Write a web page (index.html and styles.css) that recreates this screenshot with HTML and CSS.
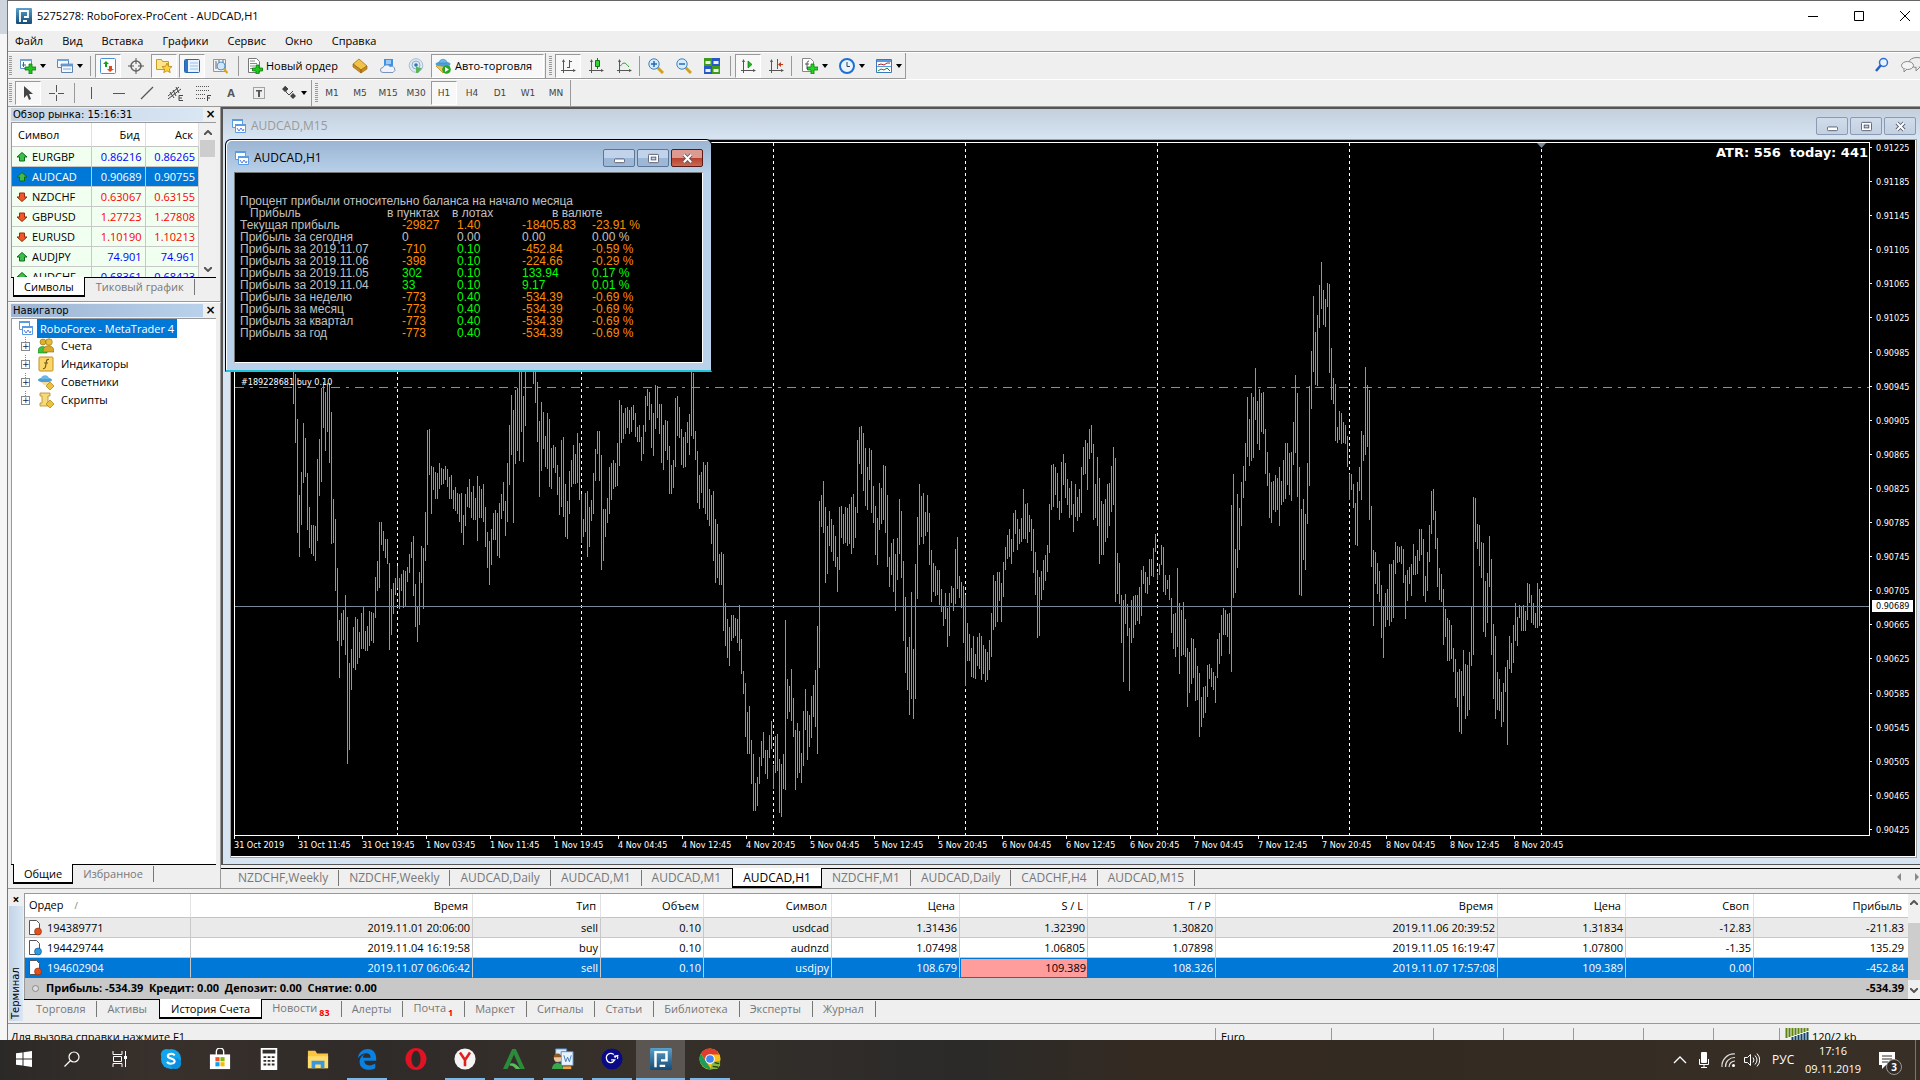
FILE: index.html
```html
<!DOCTYPE html>
<html lang="ru">
<head>
  <meta charset="UTF-8" />
  <meta name="viewport" content="width=device-width, initial-scale=1.0" />
  <title>5275278: RoboForex-ProCent - AUDCAD,H1</title>
  <link rel="stylesheet" href="styles.css">
</head>
<body>
  <!-- Иконки -->
  <svg class="sprite" aria-hidden="true">
    <linearGradient id="g-logo" x2="0" y2="1"><stop stop-color="#5aa0c8"/><stop offset="1" stop-color="#154a76"/></linearGradient>
    <symbol id="i-logo" viewBox="0 0 16 16"><rect width="16" height="16" rx="1" fill="url(#g-logo)"/><path d="M4 14V3h8v6H8M7 13h4" fill="none" stroke="#fff" stroke-width="1.800"/></symbol>
    <symbol id="i-chart" viewBox="0 0 16 16"><path d="M1.500 1.500h10v8h-10z" fill="#fff" stroke="#5b9be0"/><path d="M1 1h11v2H1z" fill="#5b9be0"/><path d="M4.500 6.500h7v0h3v8h-10z" fill="#fff" stroke="#5b9be0"/><path d="M4 6h11v2H4z" fill="#5b9be0"/><path d="M6 10l2 3 2-3 2 3 1-2" fill="none" stroke="#5b7be0"/></symbol>
    <symbol id="i-new" viewBox="0 0 16 16"><path d="M.5 1.500h11v9H.5z" fill="#fff" stroke="#5a92c8"/><path d="M0 1h12v2H0z" fill="#6fa5d8"/><path d="M3.500 4v5M2 7h4" stroke="#467"/><path d="M9 6h3v3h4v3h-4v4H9v-4H5V9h4z" fill="#1fc71f" stroke="#0a7a0a" stroke-width=".8"/></symbol>
    <symbol id="i-windows" viewBox="0 0 16 16"><path d="M.5 1.500h11v8H.5z" fill="#f4f9ff" stroke="#5a84b4"/><path d="M0 1h12v2H0z" fill="#6fa5d8"/><path d="M4.500 6.500h11v8h-11z" fill="#f4f9ff" stroke="#5a84b4"/><path d="M4 6h12v2H4zM6 11h8" fill="#6fa5d8" stroke="#5a84b4" stroke-width=".7"/></symbol>
    <symbol id="i-market" viewBox="0 0 16 16"><rect x=".5" y=".5" width="15" height="15" rx="1" fill="#fff" stroke="#4a90d9"/><path d="M6 3l3 3H7v3H5V6H3z" fill="#1a9f1a"/><path d="M10 14l-3-3h2V8h3v3h2z" fill="#e04a1a"/></symbol>
    <symbol id="i-cross" viewBox="0 0 16 16"><circle cx="8" cy="8" r="5" fill="none" stroke="#666" stroke-width="1.500"/><path d="M8 0v6M8 10v6M0 8h6M10 8h6" stroke="#555"/></symbol>
    <symbol id="i-nav" viewBox="0 0 16 16"><path d="M.5 1.500h5l1 2h6v8H.5z" fill="#ffe58a" stroke="#c79a2a"/><path d="M11 5l1.500 3.300 3.500.3-2.600 2.400.8 3.600L11 12.800l-3.200 1.800.8-3.600L6 8.600l3.500-.3z" fill="#ffd23a" stroke="#b5831a" stroke-width=".8"/></symbol>
    <symbol id="i-data" viewBox="0 0 16 16"><rect x=".5" y="1.500" width="15" height="13" rx="1" fill="#eaf4ff" stroke="#2a66b0"/><path d="M1 2h3v12H1z" fill="#2f74c8"/><path d="M6 5h8M6 8h8M6 11h8" stroke="#9bbfe6"/></symbol>
    <symbol id="i-test" viewBox="0 0 16 16"><path d="M1.500 1.500h12v12h-12z" fill="#f3f3f3" stroke="#8a99aa"/><path d="M4 3v8M7 2v7M11 2v5" stroke="#667"/><circle cx="9" cy="8" r="4" fill="#cfe6fa" stroke="#5a92c8"/><path d="M12 11l3.500 4" stroke="#d9a520" stroke-width="2"/></symbol>
    <symbol id="i-order" viewBox="0 0 16 16"><path d="M1.500.5h8l3 3v11h-11z" fill="#fff" stroke="#777"/><path d="M3 3h5M3 5.500h7M3 8h5M3 10.500h3" stroke="#888"/><path d="M9 7h3v3h3.500v3H12v3H9v-3H5.500v-3H9z" fill="#1fc71f" stroke="#0a7a0a" stroke-width=".8"/></symbol>
    <symbol id="i-book" viewBox="0 0 16 16"><path d="M7 1l8 7-6 4-8-6z" fill="#f2c14a" stroke="#a87414" stroke-width=".8"/><path d="M1 6l8 6v3L1 9zM15 8v3l-6 4v-3z" fill="#c98f1e" stroke="#8a5c0c" stroke-width=".6"/></symbol>
    <symbol id="i-cloud" viewBox="0 0 16 16"><path d="M4 1h9v8H4z" fill="#3a94e6"/><path d="M6 3h5M6 5h5" stroke="#fff"/><path d="M3 14.500a2.500 2.500 0 0 1 0-5 4 4 0 0 1 7-1 3 3 0 0 1 3 6z" fill="#eef3fb" stroke="#7a92b8"/></symbol>
    <symbol id="i-signal" viewBox="0 0 16 16"><circle cx="8" cy="7.500" r="6.800" fill="#dfe9f4" stroke="#a5bdd2"/><circle cx="8" cy="7" r="4" fill="none" stroke="#8cb0d0"/><circle cx="8" cy="7" r="1.800" fill="#2f74c8"/><path d="M8 8a7 7 0 0 0 6 2l-4 5H8z" fill="#5ab45a"/></symbol>
    <symbol id="i-auto" viewBox="0 0 16 16"><path d="M1 8l7-2 7 2-7 7z" fill="#f0c64a" stroke="#b0821a" stroke-width=".7"/><ellipse cx="8" cy="6" rx="7.500" ry="2.500" fill="#4d9fd6"/><path d="M4 5c0-5 8-5 8 0z" fill="#6ab8ea" stroke="#2d7fb8" stroke-width=".5"/><circle cx="11.500" cy="11.500" r="4.300" fill="#27a527"/><path d="M10 9v5l4-2.500z" fill="#fff"/></symbol>
    <symbol id="i-bars" viewBox="0 0 16 16"><path d="M3.500 2v13M1 12.500h14" stroke="#555" fill="none"/><path d="M2 4l1.500-3L5 4zM13 11l3 1.500-3 1.500z" fill="#555"/><path d="M9.500 2v8M9 3.500h3M7 9.500h3" stroke="#0a8a0a"/></symbol>
    <symbol id="i-candle" viewBox="0 0 16 16"><path d="M3.500 2v13M1 12.500h14" stroke="#555" fill="none"/><path d="M2 4l1.500-3L5 4zM13 11l3 1.500-3 1.500z" fill="#555"/><path d="M9.500 0v11" stroke="#0a7a0a"/><path d="M7.500 2.500h4v6h-4z" fill="#35d335" stroke="#0a7a0a"/></symbol>
    <symbol id="i-line" viewBox="0 0 16 16"><path d="M3.500 2v13M1 12.500h14" stroke="#555" fill="none"/><path d="M2 4l1.500-3L5 4zM13 11l3 1.500-3 1.500z" fill="#555"/><path d="M3 9c2-1 3-4 5-4s3 2 5 4" fill="none" stroke="#2a9a2a"/></symbol>
    <symbol id="i-zin" viewBox="0 0 16 16"><path d="M9 9l6 6" stroke="#d2a01e" stroke-width="3"/><circle cx="6" cy="6" r="5.200" fill="#d4ecfb" stroke="#3f80c2"/><path d="M3 6h6M6 3v6" stroke="#2a6ab0" stroke-width="1.500"/></symbol>
    <symbol id="i-zout" viewBox="0 0 16 16"><path d="M9 9l6 6" stroke="#d2a01e" stroke-width="3"/><circle cx="6" cy="6" r="5.200" fill="#d4ecfb" stroke="#3f80c2"/><path d="M3 6h6" stroke="#2a6ab0" stroke-width="1.500"/></symbol>
    <symbol id="i-tile" viewBox="0 0 16 16"><path d="M0 0h8v8H0zM8 8h8v8H8z" fill="#3f9a1a"/><path d="M8 0h8v8H8zM0 8h8v8H0z" fill="#2858c8"/><path d="M1.500 3h5v3h-5zM9.500 3h5v3h-5zM1.500 11h5v3h-5zM9.500 11h5v3h-5z" fill="#e9f3e9"/></symbol>
    <symbol id="i-scroll" viewBox="0 0 16 16"><path d="M3.500 2v13M1 12.500h14" stroke="#555" fill="none"/><path d="M2 4l1.500-3L5 4zM13 11l3 1.500-3 1.500z" fill="#555"/><path d="M8 3l4 3.500L8 10z" fill="#1fb81f" stroke="#0a7a0a" stroke-width=".7"/></symbol>
    <symbol id="i-shift" viewBox="0 0 16 16"><path d="M3.500 2v13M1 12.500h14" stroke="#555" fill="none"/><path d="M2 4l1.500-3L5 4zM13 11l3 1.500-3 1.500z" fill="#555"/><path d="M9.500 1v10" stroke="#2a66b0"/><path d="M10 6.500l3-2.500v2h2v1h-2v2z" fill="#c23a10"/></symbol>
    <symbol id="i-ind" viewBox="0 0 16 16"><path d="M.5.5h8l3 3v10H.5z" fill="#fff" stroke="#888"/><path d="M7 3c-2 0-2 2-2 3v5M3 6h4" fill="none" stroke="#555"/><path d="M9 6h3v3h4v3h-4v4H9v-4H5.500V9H9z" fill="#1fd71f" stroke="#0a7a0a" stroke-width=".8"/></symbol>
    <symbol id="i-clock" viewBox="0 0 16 16"><circle cx="8" cy="8" r="7" fill="#eaf4ff" stroke="#1f6fd0" stroke-width="2"/><path d="M8 4v4.500h3" fill="none" stroke="#345"/></symbol>
    <symbol id="i-tpl" viewBox="0 0 16 16"><path d="M.5 1.500h15v13H.5z" fill="#fff" stroke="#3a78bc"/><path d="M1 2h14v2H1zM1 8h14v1H1z" fill="#5a9ade"/><path d="M2 7l3-1 3 1 3-2h3" fill="none" stroke="#a02a2a"/><path d="M2 13l3-2 3 1 3-2 3 3" fill="none" stroke="#1a8a1a"/></symbol>
    <symbol id="i-cursor" viewBox="0 0 16 16"><path d="M4 1v12l3-3 2 5 2-1-2-5h4z" fill="#444"/></symbol>
    <symbol id="i-plus" viewBox="0 0 16 16"><path d="M8.500 0v7M8.500 10v6M1 8.500h6M10 8.500h6" stroke="#555"/></symbol>
    <symbol id="i-vl" viewBox="0 0 16 16"><path d="M8.500 2v12" stroke="#555"/></symbol>
    <symbol id="i-hl" viewBox="0 0 16 16"><path d="M2 8.500h12" stroke="#555"/></symbol>
    <symbol id="i-tl" viewBox="0 0 16 16"><path d="M2 14L14 2" stroke="#555" stroke-width="1.200"/></symbol>
    <symbol id="i-chan" viewBox="0 0 16 16"><path d="M1 11L12 2M1 14L14 4M3 7l4 6M6 5l3 6M9 2l3 6" stroke="#444"/><path d="M16 10.500h-4v5h4M12 13h3" fill="none" stroke="#444"/></symbol>
    <symbol id="i-fib" viewBox="0 0 16 16"><path d="M1 1.500h14M1 5.500h14M1 9.500h10M1 13.500h9" stroke="#555" stroke-dasharray="1 1"/><path d="M12.500 16v-5.500H16M12 13h3" fill="none" stroke="#444"/></symbol>
    <symbol id="i-label" viewBox="0 0 16 16"><path d="M2.500 2.500h11v11h-11z" fill="none" stroke="#555" stroke-dasharray="1 1"/><path d="M5 5h6v1.500H9V12H7V6.500H5z" fill="#555"/></symbol>
    <symbol id="i-arrows" viewBox="0 0 16 16"><path d="M4 1l3 3H5v3l3 3 4-4M2 4h5" fill="none" stroke="#444"/><path d="M4 1l3 3-3 3-3-3zM12 8l3 3-3 3-3-3z" fill="#444"/></symbol>
    <symbol id="i-up" viewBox="0 0 12 12"><path d="M6 1.500l5 4.500H8.500v4h-5V6H1z" fill="#3dbd4a" stroke="#0f6a1c"/></symbol>
    <symbol id="i-down" viewBox="0 0 12 12"><path d="M6 10.500L1 6h2.500V2h5v4H11z" fill="#f0582a" stroke="#98290a"/></symbol>
    <symbol id="i-acc" viewBox="0 0 16 16"><circle cx="5" cy="4" r="3" fill="#e0b02a" stroke="#8a6a10" stroke-width=".6"/><circle cx="11" cy="4" r="3.300" fill="#e8bd3a" stroke="#8a6a10" stroke-width=".6"/><path d="M0 13c0-6 9-6 9 0v2H0z" fill="#3cc43c" stroke="#1a7a1a" stroke-width=".6"/><path d="M5 13c0-7 11-7 11 0v1H5z" fill="#dba928" stroke="#8a6a10" stroke-width=".6"/></symbol>
    <symbol id="i-fx" viewBox="0 0 16 16"><rect x="1" y="1" width="14" height="14" rx="1" fill="#fbd76a" stroke="#c0902a"/><path d="M11 3.500c-3-.5-2.500 2-3 4.500s-.5 5-3 4.500M6 7h4" fill="none" stroke="#7a5a10" stroke-width="1.200"/></symbol>
    <symbol id="i-adv" viewBox="0 0 16 16"><ellipse cx="7" cy="6" rx="7" ry="2.500" fill="#4d9fd6"/><path d="M3 5c0-5 8-5 8 0z" fill="#6ab8ea"/><path d="M3 8h9l-2 3H6z" fill="#f3dca0"/><path d="M12 8l4 4-4 4-4-4z" fill="#ecc23c" stroke="#a77b15" stroke-width=".7"/></symbol>
    <symbol id="i-scr" viewBox="0 0 16 16"><path d="M2 1h10v3h-2v7h2v3H2v-3h2V4H2z" fill="#f6d97a" stroke="#b88a20" stroke-width=".8"/><path d="M12 8l4 4-4 4-4-4z" fill="#ecc23c" stroke="#a77b15" stroke-width=".7"/></symbol>
    <symbol id="i-sell" viewBox="0 0 16 16"><path d="M2.500.5h7l3 3v11h-10z" fill="#fff" stroke="#555"/><circle cx="11" cy="11.500" r="3.500" fill="#e2501e" stroke="#8a2a08" stroke-width=".6"/></symbol>
    <symbol id="i-buy" viewBox="0 0 16 16"><path d="M2.500.5h7l3 3v11h-10z" fill="#fff" stroke="#555"/><circle cx="11" cy="11.500" r="3.500" fill="#2a9be2" stroke="#0a4a8a" stroke-width=".6"/></symbol>
    <symbol id="i-find" viewBox="0 0 16 16"><circle cx="9.500" cy="5.500" r="4" fill="#e8f2ff" stroke="#2f6fd0" stroke-width="1.500"/><path d="M7 8l-5 6" stroke="#2a5fc0" stroke-width="2.500"/></symbol>
    <symbol id="i-chat" viewBox="0 0 24 16"><ellipse cx="16" cy="5.500" rx="8" ry="5" fill="#eee" stroke="#888"/><path d="M15 10v4l4-4" fill="#eee" stroke="#888"/><ellipse cx="6.500" cy="8.500" rx="6" ry="4" fill="#f4f4f4" stroke="#888"/><path d="M3 12v3l3-3" fill="#f4f4f4" stroke="#888"/></symbol>
    <symbol id="w-min" viewBox="0 0 12 12"><rect x=".5" y="6.500" width="11" height="4" rx="1" fill="#fff" stroke="#555a70"/></symbol>
    <symbol id="w-max" viewBox="0 0 12 12"><rect x=".5" y="1.500" width="11" height="9" rx="1" fill="#fff" stroke="#555a70"/><rect x="3.500" y="4.500" width="5" height="3" fill="#c5d3e4" stroke="#555a70"/></symbol>
    <symbol id="w-close" viewBox="0 0 12 12"><path d="M2 2l8 8M10 2l-8 8" stroke="#555a70" stroke-width="4"/><path d="M2 2l8 8M10 2l-8 8" stroke="#fff" stroke-width="2.200"/></symbol>
  </svg>

  <div class="screen">
    <div class="behind"></div>
    <div class="app">
      <header class="titlebar">
        <svg class="ic"><use href="#i-logo"/></svg>
        <h1>5275278: RoboForex-ProCent - AUDCAD,H1</h1>
        <div class="caption-btns">
          <button aria-label="Свернуть"><svg viewBox="0 0 10 10"><path d="M0 5.500h10"/></svg></button>
          <button aria-label="Развернуть"><svg viewBox="0 0 10 10"><path d="M.5.5h9v9h-9z"/></svg></button>
          <button aria-label="Закрыть"><svg viewBox="0 0 10 10"><path d="M0 0l10 10M10 0L0 10"/></svg></button>
        </div>
      </header>

      <nav class="menu">
        <button>Файл</button><button>Вид</button><button>Вставка</button><button>Графики</button><button>Сервис</button><button>Окно</button><button>Справка</button>
      </nav>

      <div class="toolbar">
        <div class="band">
          <i class="grip"></i>
          <button class="drop" aria-label="Новый график"><svg class="ic"><use href="#i-new"/></svg></button>
          <button class="drop" aria-label="Профили"><svg class="ic"><use href="#i-windows"/></svg></button>
          <i class="sep wide"></i>
          <button class="on" aria-label="Обзор рынка"><svg class="ic"><use href="#i-market"/></svg></button>
          <button aria-label="Окно данных"><svg class="ic"><use href="#i-cross"/></svg></button>
          <button class="on" aria-label="Навигатор"><svg class="ic"><use href="#i-nav"/></svg></button>
          <button class="on" aria-label="Терминал"><svg class="ic"><use href="#i-data"/></svg></button>
          <button aria-label="Тестер стратегий"><svg class="ic"><use href="#i-test"/></svg></button>
          <i class="sep wide"></i>
          <button class="text order"><svg class="ic"><use href="#i-order"/></svg>Новый ордер</button>
          <button aria-label="MetaEditor"><svg class="ic"><use href="#i-book"/></svg></button>
          <button aria-label="Облако"><svg class="ic"><use href="#i-cloud"/></svg></button>
          <button aria-label="Сигналы"><svg class="ic"><use href="#i-signal"/></svg></button>
          <button class="text auto on"><svg class="ic"><use href="#i-auto"/></svg>Авто-торговля</button>
        </div>
        <div class="band">
          <i class="grip wide"></i>
          <button class="on" aria-label="Бары"><svg class="ic"><use href="#i-bars"/></svg></button>
          <button aria-label="Свечи"><svg class="ic"><use href="#i-candle"/></svg></button>
          <button aria-label="Линия"><svg class="ic"><use href="#i-line"/></svg></button>
          <i class="sep"></i>
          <button aria-label="Увеличить"><svg class="ic"><use href="#i-zin"/></svg></button>
          <button aria-label="Уменьшить"><svg class="ic"><use href="#i-zout"/></svg></button>
          <button aria-label="Выстроить окна"><svg class="ic"><use href="#i-tile"/></svg></button>
          <i class="sep wide"></i>
          <button class="on" aria-label="Автопрокрутка"><svg class="ic"><use href="#i-scroll"/></svg></button>
          <button aria-label="Сдвиг графика"><svg class="ic"><use href="#i-shift"/></svg></button>
          <i class="sep"></i>
          <button class="drop" aria-label="Индикаторы"><svg class="ic"><use href="#i-ind"/></svg></button>
          <button class="drop" aria-label="Периоды"><svg class="ic"><use href="#i-clock"/></svg></button>
          <button class="drop" aria-label="Шаблоны"><svg class="ic"><use href="#i-tpl"/></svg></button>
        </div>
        <div class="tools-right">
          <button aria-label="Поиск"><svg class="ic"><use href="#i-find"/></svg></button>
          <button aria-label="Чат"><svg class="ic chat"><use href="#i-chat"/></svg></button>
        </div>
      </div>

      <div class="toolbar second">
        <div class="band">
          <i class="grip"></i>
          <button class="on" aria-label="Курсор"><svg class="ic"><use href="#i-cursor"/></svg></button>
          <button aria-label="Перекрестие"><svg class="ic"><use href="#i-plus"/></svg></button>
          <i class="sep wide"></i>
          <button aria-label="Вертикальная линия"><svg class="ic"><use href="#i-vl"/></svg></button>
          <button aria-label="Горизонтальная линия"><svg class="ic"><use href="#i-hl"/></svg></button>
          <button aria-label="Трендовая линия"><svg class="ic"><use href="#i-tl"/></svg></button>
          <button aria-label="Канал"><svg class="ic"><use href="#i-chan"/></svg></button>
          <button aria-label="Фибоначчи"><svg class="ic"><use href="#i-fib"/></svg></button>
          <button class="letter">A</button>
          <button aria-label="Текстовая метка"><svg class="ic"><use href="#i-label"/></svg></button>
          <button class="drop" aria-label="Стрелки"><svg class="ic"><use href="#i-arrows"/></svg></button>
        </div>
        <div class="band periods">
          <i class="grip wide"></i>
          <button>M1</button><button>M5</button><button>M15</button><button>M30</button><button class="on">H1</button><button>H4</button><button>D1</button><button>W1</button><button>MN</button>
        </div>
      </div>

      <main class="workspace">
        <aside class="side">
          <section class="panel market">
            <h2 class="cap light"><span>Обзор рынка: 15:16:31</span><button aria-label="Закрыть">×</button></h2>
            <div class="panel-body">
              <table class="quotes">
                <thead><tr><th>Символ</th><th>Бид</th><th>Аск</th></tr></thead>
                <tbody>
                  <tr class="up"><td><svg><use href="#i-up"/></svg>EURGBP</td><td>0.86216</td><td>0.86265</td></tr>
                  <tr class="sel"><td><svg><use href="#i-up"/></svg>AUDCAD</td><td>0.90689</td><td>0.90755</td></tr>
                  <tr class="down"><td><svg><use href="#i-down"/></svg>NZDCHF</td><td>0.63067</td><td>0.63155</td></tr>
                  <tr class="down"><td><svg><use href="#i-down"/></svg>GBPUSD</td><td>1.27723</td><td>1.27808</td></tr>
                  <tr class="down"><td><svg><use href="#i-down"/></svg>EURUSD</td><td>1.10190</td><td>1.10213</td></tr>
                  <tr class="up"><td><svg><use href="#i-up"/></svg>AUDJPY</td><td>74.901</td><td>74.961</td></tr>
                  <tr class="up"><td><svg><use href="#i-up"/></svg>AUDCHF</td><td>0.68361</td><td>0.68423</td></tr>
                </tbody>
              </table>
              <div class="scroll"><svg viewBox="0 0 8 5"><path d="M0 5l4-4 4 4"/></svg><i></i><svg viewBox="0 0 8 5"><path d="M0 0l4 4 4-4"/></svg></div>
            </div>
            <div class="tabs"><button class="active">Символы</button><button>Тиковый график</button></div>
          </section>

          <section class="panel navigator">
            <h2 class="cap"><span>Навигатор</span><button aria-label="Закрыть">×</button></h2>
            <div class="panel-body tree">
              <div class="root"><svg class="ic"><use href="#i-chart"/></svg><span>RoboForex - MetaTrader 4</span></div>
              <ul>
                <li><b>+</b><svg class="ic"><use href="#i-acc"/></svg>Счета</li>
                <li><b>+</b><svg class="ic"><use href="#i-fx"/></svg>Индикаторы</li>
                <li><b>+</b><svg class="ic"><use href="#i-adv"/></svg>Советники</li>
                <li><b>+</b><svg class="ic"><use href="#i-scr"/></svg>Скрипты</li>
              </ul>
            </div>
            <div class="tabs"><button class="active">Общие</button><button>Избранное</button></div>
          </section>
        </aside>

        <div class="mdi-wrap">
          <div class="mdi">
            <section class="win back">
              <div class="win-title"><svg class="ic"><use href="#i-chart"/></svg><span>AUDCAD,M15</span>
                <div class="win-btns"><button aria-label="Свернуть"><svg><use href="#w-min"/></svg></button><button aria-label="Развернуть"><svg><use href="#w-max"/></svg></button><button aria-label="Закрыть"><svg><use href="#w-close"/></svg></button></div>
              </div>
              <div class="chart">
                <div class="plot">
                  <svg id="plot"></svg>
                  <span class="order-label">#189228681 buy 0.10</span>
                  <span class="atr">ATR: 556&nbsp; today: 441</span>
                </div>
                <div class="prices"><div id="prices"></div><span class="now">0.90689</span></div>
                <div class="times" id="times"></div>
              </div>
            </section>

            <section class="win front">
              <div class="win-title"><svg class="ic"><use href="#i-chart"/></svg><span>AUDCAD,H1</span>
                <div class="win-btns"><button aria-label="Свернуть"><svg><use href="#w-min"/></svg></button><button aria-label="Развернуть"><svg><use href="#w-max"/></svg></button><button class="close" aria-label="Закрыть"><svg><use href="#w-close"/></svg></button></div>
              </div>
              <div class="profit">
                <p>Процент прибыли относительно баланса на начало месяца</p>
                <table>
                  <thead><tr><th>Прибыль</th><th>в пунктах</th><th>в лотах</th><th>в валюте</th></tr></thead>
                  <tbody>
                    <tr class="neg"><td>Текущая прибыль</td><td>-29827</td><td class="neg">1.40</td><td>-18405.83</td><td>-23.91 %</td></tr>
                    <tr class="zero"><td>Прибыль за сегодня</td><td>0</td><td>0.00</td><td>0.00</td><td>0.00 %</td></tr>
                    <tr class="neg"><td>Прибыль за 2019.11.07</td><td>-710</td><td>0.10</td><td>-452.84</td><td>-0.59 %</td></tr>
                    <tr class="neg"><td>Прибыль за 2019.11.06</td><td>-398</td><td>0.10</td><td>-224.66</td><td>-0.29 %</td></tr>
                    <tr><td>Прибыль за 2019.11.05</td><td>302</td><td>0.10</td><td>133.94</td><td>0.17 %</td></tr>
                    <tr><td>Прибыль за 2019.11.04</td><td>33</td><td>0.10</td><td>9.17</td><td>0.01 %</td></tr>
                    <tr class="neg"><td>Прибыль за неделю</td><td>-773</td><td>0.40</td><td>-534.39</td><td>-0.69 %</td></tr>
                    <tr class="neg"><td>Прибыль за месяц</td><td>-773</td><td>0.40</td><td>-534.39</td><td>-0.69 %</td></tr>
                    <tr class="neg"><td>Прибыль за квартал</td><td>-773</td><td>0.40</td><td>-534.39</td><td>-0.69 %</td></tr>
                    <tr class="neg"><td>Прибыль за год</td><td>-773</td><td>0.40</td><td>-534.39</td><td>-0.69 %</td></tr>
                  </tbody>
                </table>
              </div>
            </section>
          </div>
          <div class="tabs chart-tabs">
            <button>NZDCHF,Weekly</button><button>NZDCHF,Weekly</button><button>AUDCAD,Daily</button><button>AUDCAD,M1</button><button>AUDCAD,M1</button><button class="active">AUDCAD,H1</button><button>NZDCHF,M1</button><button>AUDCAD,Daily</button><button>CADCHF,H4</button><button>AUDCAD,M15</button>
            <span class="tab-nav"><i></i><i></i></span>
          </div>
        </div>
      </main>

      <section class="terminal">
        <div class="term-side"><button aria-label="Закрыть">×</button><span>Терминал</span></div>
        <div class="term-main">
          <div class="term-body">
            <table class="orders">
              <colgroup><col class="c166"><col class="c282"><col class="c128"><col class="c103"><col class="c128"><col class="c128"><col class="c128"><col class="c128"><col class="c282"><col class="c128"><col class="c128"><col></colgroup>
              <thead><tr><th>Ордер <small>/</small></th><th>Время</th><th>Тип</th><th>Объем</th><th>Символ</th><th>Цена</th><th>S / L</th><th>T / P</th><th>Время</th><th>Цена</th><th>Своп</th><th>Прибыль</th></tr></thead>
              <tbody>
                <tr class="alt"><td><svg class="ic"><use href="#i-sell"/></svg>194389771</td><td>2019.11.01 20:06:00</td><td>sell</td><td>0.10</td><td>usdcad</td><td>1.31436</td><td>1.32390</td><td>1.30820</td><td>2019.11.06 20:39:52</td><td>1.31834</td><td>-12.83</td><td>-211.83</td></tr>
                <tr><td><svg class="ic"><use href="#i-buy"/></svg>194429744</td><td>2019.11.04 16:19:58</td><td>buy</td><td>0.10</td><td>audnzd</td><td>1.07498</td><td>1.06805</td><td>1.07898</td><td>2019.11.05 16:19:47</td><td>1.07800</td><td>-1.35</td><td>135.29</td></tr>
                <tr class="sel"><td><svg class="ic"><use href="#i-sell"/></svg>194602904</td><td>2019.11.07 06:06:42</td><td>sell</td><td>0.10</td><td>usdjpy</td><td>108.679</td><td class="hit">109.389</td><td>108.326</td><td>2019.11.07 17:57:08</td><td>109.389</td><td>0.00</td><td>-452.84</td></tr>
              </tbody>
              <tfoot><tr><td colspan="11"><i class="dot"></i>Прибыль: -534.39&nbsp; Кредит: 0.00&nbsp; Депозит: 0.00&nbsp; Снятие: 0.00</td><td>-534.39</td></tr></tfoot>
            </table>
            <div class="scroll low"><svg viewBox="0 0 8 5"><path d="M0 5l4-4 4 4"/></svg><i></i><svg viewBox="0 0 8 5"><path d="M0 0l4 4 4-4"/></svg></div>
          </div>
          <div class="tabs term-tabs">
            <button>Торговля</button><button>Активы</button><button class="active">История Счета</button><button>Новости<sub>83</sub></button><button>Алерты</button><button>Почта<sub>1</sub></button><button>Маркет</button><button>Сигналы</button><button>Статьи</button><button>Библиотека</button><button>Эксперты</button><button>Журнал</button>
          </div>
        </div>
      </section>

      <footer class="status">
        <span class="help">Для вызова справки нажмите F1</span>
        <span class="s116">Euro</span><span class="s102"></span><span class="s70"></span><span class="s70"></span><span class="s70"></span><span class="s70"></span><span class="s66"></span>
        <span class="link"><svg viewBox="0 0 24 12"><path d="M1.500 0v10M4.500 0v9M7.500 0v8M10.500 0v7M13.500 0v6M16.500 0v5M19.500 0v4M22.500 0v3" stroke="#5f8410" stroke-width="2"/><path d="M7.500 9v3M10.500 8v4M13.500 7v5M16.500 6v6M19.500 5v7M22.500 4v8" stroke="#0f4468" stroke-width="2"/></svg>120/2 kb</span>
      </footer>
    </div>
  </div>

  <footer class="taskbar">
    <button aria-label="Пуск"><svg viewBox="0 0 16 16"><path d="M0 2.300l6.500-.9v6.100H0zM7.500 1.300L16 0v7.500H7.500zM0 8.500h6.500v6.100L0 13.700zM7.500 8.500H16V16l-8.500-1.200z" fill="#fff"/></svg></button>
    <button aria-label="Поиск"><svg viewBox="0 0 16 16"><circle cx="10" cy="6" r="5" fill="none" stroke="#fff" stroke-width="1.200"/><path d="M6.500 9.500L.5 15.500" stroke="#fff" stroke-width="1.200"/></svg></button>
    <button class="view" aria-label="Представление задач"><svg viewBox="0 0 16 16"><path d="M1 0v3.500h9V0M1 16v-3.500h9V16M1.500 5.500h8v5h-8zM13.500 0v16" fill="none" stroke="#fff"/><path d="M12 5h3v3h-3z" fill="#fff"/></svg></button>
    <button aria-label="Skype"><svg class="big" viewBox="0 0 24 24"><circle cx="12" cy="12" r="11" fill="#12a5ee"/><circle cx="7" cy="7" r="6" fill="#12a5ee"/><circle cx="17" cy="17" r="6" fill="#0a8fe0"/><path d="M16 8c-2-2.500-8-2-7.500 1 .5 3 7.500 2 7.500 5.500 0 3-6 3.500-8.500.8" fill="none" stroke="#fff" stroke-width="2.200"/></svg></button>
    <button aria-label="Магазин"><svg class="big" viewBox="0 0 24 24"><path d="M1 7h22v16H1z" fill="#fff"/><path d="M8 10V4a4 4 0 0 1 8 0v6" fill="none" stroke="#fff" stroke-width="1.500"/><path d="M7 10h4.500v4.500H7z" fill="#f25022"/><path d="M12.500 10H17v4.500h-4.500z" fill="#7fba00"/><path d="M7 15.500h4.500V20H7z" fill="#00a4ef"/><path d="M12.500 15.500H17V20h-4.500z" fill="#ffb900"/></svg></button>
    <button aria-label="Калькулятор"><svg class="big" viewBox="0 0 24 24"><path d="M3 0h18v24H3z" fill="#fff"/><path d="M5 2h14v4H5zM6 9h3v2H6zM10.500 9h3v2h-3zM15 9h3v2h-3zM6 13h3v2H6zM10.500 13h3v2h-3zM15 13h3v2h-3zM6 17h3v2H6zM10.500 17h3v2h-3zM15 17h3v2h-3z" fill="#33302c"/></svg></button>
    <button aria-label="Проводник"><svg class="big" viewBox="0 0 24 24"><path d="M1 3h8l2 3h12v16H1z" fill="#fbc540"/><path d="M1 9h22v13H1z" fill="#ffdc6e"/><path d="M5 22v-8h14v8h-4v-4H9v4z" fill="#3a97dd"/></svg></button>
    <button class="run" aria-label="Edge"><svg class="big" viewBox="0 0 24 24"><path d="M2 11C3 4 8 1 13 1c6 0 9 5 9 10v3H9c0 6 8 6 12 3v5C13 26 3 23 4 14c.5-4 3-6 6-8-2 2-2.500 3-2.500 4.500H16C16 3 6 5 2 11z" fill="#0a80e0"/></svg></button>
    <button aria-label="Opera"><svg class="big" viewBox="0 0 24 24"><ellipse cx="12" cy="12" rx="11.500" ry="12" fill="#e01224"/><ellipse cx="12" cy="12" rx="5" ry="9" fill="#2d2a28"/></svg></button>
    <button class="run" aria-label="Яндекс"><svg class="big" viewBox="0 0 24 24"><circle cx="12" cy="12" r="11.500" fill="#f4f4f4"/><path d="M6.500 5l5.500 8v7M17.500 5L12 13" fill="none" stroke="#e0201a" stroke-width="2.800"/></svg></button>
    <button class="run" aria-label="Терминал A"><svg class="big" viewBox="0 0 24 24"><path d="M10 1h4l10 22h-5L12 7 5 23H0z" fill="#2c8a3a"/><path d="M8 17c4-1 7 1 11 6h-5c-2-3-4-4-7-4z" fill="#53c05a"/></svg></button>
    <button class="run" aria-label="Документы"><svg class="big" viewBox="0 0 24 24"><path d="M4 1h12v14H4z" fill="#dcebfa" stroke="#4a88cc"/><path d="M10 4h13v15H10z" fill="#eaf3fd" stroke="#4a88cc"/><path d="M13 8l2 7 2-5 2 5 2-7" fill="none" stroke="#3a78bc"/><circle cx="6" cy="11" r="4" fill="#f0c49a"/><path d="M2 10c0-6 9-5 8 0z" fill="#8a5a20"/><path d="M0 23c0-9 12-9 12 0z" fill="#3aa84a"/><path d="M12 20h9v3h-9z" fill="#f0a040"/></svg></button>
    <button class="run" aria-label="G"><svg class="big" viewBox="0 0 24 24"><circle cx="12" cy="12" r="11.500" fill="#0a0a86"/><path d="M14 7c-5-3-9 1-8 5s6 6 9 1h-4M15 11c2-4 4-2 3 1M14 9l5-1" fill="none" stroke="#fff" stroke-width="1.300"/></svg></button>
    <button class="run current" aria-label="MetaTrader"><svg class="big"><use href="#i-logo"/></svg></button>
    <button class="run" aria-label="Chrome"><svg class="big" viewBox="0 0 24 24"><circle cx="12" cy="12" r="11.500" fill="#fbc116"/><path d="M2 6a11.500 11.500 0 0 1 20 1H12l-5 6z" fill="#e33b2e"/><path d="M2 6l6 9 5 8A11.500 11.500 0 0 1 2 6z" fill="#1f9d55"/><circle cx="12" cy="12" r="5.300" fill="#fff"/><circle cx="12" cy="12" r="4.200" fill="#4285f4"/><path d="M13 23c0-7 4-9 10-9v5l-3 4z" fill="#8ab83c"/><path d="M17 16l5 1M15 20l6 1" stroke="#24401a" stroke-width="1.500"/></svg></button>
    <div class="tray">
      <svg class="t16" viewBox="0 0 16 16"><path d="M2 11l6-6 6 6" fill="none" stroke="#fff" stroke-width="1.300"/></svg>
      <svg class="t16" viewBox="0 0 16 16"><rect x="5" y="0" width="6" height="11" rx="1" fill="#fff"/><path d="M3.500 7v5.500h9V7M8 13v3M5 15.500h6" fill="none" stroke="#fff"/></svg>
      <svg class="t16" viewBox="0 0 16 16"><path d="M2 15A12 12 0 0 1 15 2M5.500 15A9 9 0 0 1 15 5.500M9 15a6 6 0 0 1 6-6" fill="none" stroke="#ddd" stroke-width="1.200"/><circle cx="13.500" cy="13.500" r="1.500" fill="#fff"/></svg>
      <svg class="t16" viewBox="0 0 16 16"><path d="M.5 5.500h3l3-3v11l-3-3h-3zM9 5.500q2 2.500 0 5M11 3.500q4 4.500 0 9M13 1.500q5.500 6.500 0 13" fill="none" stroke="#fff"/></svg>
      <span class="lang">РУС</span>
      <span class="clock">17:16<br>09.11.2019</span>
      <span class="notes"><svg viewBox="0 0 20 20"><path d="M1 1h16v13H8l-4 4v-4H1z" fill="#fff"/><path d="M4 5h10M4 8h10M4 11h6" stroke="#332b25"/></svg><b>3</b></span>
    </div>
  </footer>

  <script src="chart.js"></script>
</body>
</html>
```
FILE: styles.css
```css
* { box-sizing: border-box }
body { margin: 0; height: 100vh; display: flex; flex-direction: column; overflow: hidden; background: #efefef; color: #000; font: 11px/16px "Open Sans", "Noto Sans", sans-serif }
button { margin: 0; padding: 0; border: 0; background: none; font: inherit; color: inherit; white-space: nowrap }
h1, h2, p, ul { margin: 0; padding: 0; font: inherit; list-style: none }
table { border-collapse: separate; border-spacing: 0; table-layout: fixed }
th, td { padding: 0; font-weight: normal; text-align: left; white-space: nowrap }
svg { display: block; flex: none }
.sprite { position: absolute; width: 0; height: 0 }
.ic { width: 16px; height: 16px }

.screen { flex: 1; display: flex; min-height: 0; overflow: hidden }
.behind { width: 7px; flex: none; background: linear-gradient(#cfd5dc 34px, #f6f6f6 34px) }
.app { flex: 1; min-width: 0; display: flex; flex-direction: column; border-left: 1px solid #777; border-top: 1px solid #666; overflow: hidden }

/* Заголовок и меню */
.titlebar { height: 30px; flex: none; display: flex; align-items: center; gap: 5px; padding-left: 8px; background: #fff }
.caption-btns { margin-left: auto; margin-right: -8px; display: flex }
.caption-btns button { width: 46px; height: 28px; display: flex; align-items: center; justify-content: center }
.caption-btns svg { width: 10px; height: 10px; fill: none; stroke: #000 }
.menu { height: 21px; flex: none; display: flex; gap: 19px; padding-left: 7px; border-bottom: 1px solid #999 }
.menu button { line-height: 20px }

/* Панели инструментов */
.toolbar { height: 27px; flex: none; display: flex; border-top: 1px solid #fff }
.band { display: flex; align-items: center; border-right: 1px solid #999; border-bottom: 1px solid #999 }
.second .band { border-bottom: 0 }
.grip { width: 4px; height: 20px; background: repeating-linear-gradient(#999 0 1px, transparent 1px 2px); background-size: 3px 20px; background-repeat: no-repeat; background-position: 1px 0 }
.grip.wide { width: 8px; background-position: 3px 0 }
.second .grip { width: 6px }
.toolbar button { width: 28px; height: 24px; display: flex; align-items: center; justify-content: center }
.toolbar .on { background: #f8f8f8; border: 1px solid #fff; border-top-color: #999; border-left-color: #999; width: 26px; margin: 0 1px }
.toolbar .drop { width: 37px; justify-content: flex-start; gap: 4px; padding-left: 8px }
.drop::after { content: ""; border: 3px solid transparent; border-top: 4px solid #000; border-bottom: 0 }
.toolbar .text { gap: 3px; justify-content: flex-start; padding-left: 5px }
.toolbar .order { width: 104px }
.toolbar .auto { width: 113px; padding-left: 3px; gap: 4px }
.sep { width: 4px; height: 20px; background: linear-gradient(90deg, transparent 1px, #999 1px 2px, transparent 2px) }
.sep.wide { width: 8px; background: linear-gradient(90deg, transparent 4px, #999 4px 5px, transparent 5px) }
.second .sep { width: 7px }
.second .drop { width: 38px }
.letter { font-weight: bold; color: #555 }
.periods { color: #444 }
.periods button { font: 9px "DejaVu Sans", sans-serif }
.tools-right { margin-left: auto; display: flex; overflow: hidden }
.tools-right .chat { width: 24px }
.toolbar .tools-right button { width: 38px }
.toolbar .tools-right button:last-child { width: 19px; justify-content: flex-start }

/* Рабочая область */
.workspace { flex: 1; min-height: 0; display: flex; border-top: 1px solid #999 }
.side { width: 213px; flex: none; display: flex; flex-direction: column }
.panel { display: flex; flex-direction: column; padding: 1px 4px 0 3px; border-right: 1px solid #999; border-bottom: 1px solid #999 }
.market { height: 195px; flex: none }
.navigator { flex: 1; min-height: 0; border-top: 1px solid #fff }
.cap { display: flex; height: 13px; margin-bottom: 1px; margin-right: -2px; font: 10px/13px "DejaVu Sans", sans-serif }
.cap span { flex: 1; padding-left: 2px; background: linear-gradient(90deg, #9db5d3, #b9d1ea) }
.cap.light span { background: linear-gradient(90deg, #c5d2e2, #d9e6f4) }
.cap button { width: 15px; font-weight: bold; font-size: 12px }
.panel-body { flex: 1; min-height: 0; display: flex; background: #fff; border-left: 1px solid #999; border-top: 1px solid #999; overflow: hidden }
.quotes { flex: 1 }
.quotes th { height: 24px; border-right: 1px solid #e0e0e0; border-bottom: 1px solid #c4c4c4; padding: 0 5px 0 6px }
.quotes th:first-child { width: 80px }
.quotes td { height: 20px; line-height: 19px; background: #f0fff0; border-right: 1px solid #c8c8c8; border-bottom: 1px solid #c8c8c8; padding-right: 3px }
.quotes td:first-child { display: flex; align-items: center; gap: 4px; padding-left: 4px; color: #000 }
.quotes td svg { width: 12px; height: 12px }
.quotes th + th, .quotes td + td { text-align: right }
.quotes .up { color: #00f }
.quotes .down { color: #f00 }
.quotes .sel td { background: #0078d7; color: #fff }
.scroll { width: 17px; flex: none; display: flex; flex-direction: column; align-items: center; background: #f0f0f0; padding: 7px 0 5px }
.scroll svg { width: 8px; height: 5px; fill: none; stroke: #555; stroke-width: 2 }
.scroll i { width: 15px; height: 17px; background: #cdcdcd; margin: 5px 0 auto }

.tabs { height: 20px; flex: none; display: flex; border-top: 1px solid #000; color: #777 }
.tabs button { height: 16px; margin-top: 1px; padding: 0 10px; border-right: 1px solid #777; line-height: 14px }
.tabs .active { height: 20px; margin-top: -1px; padding: 1px 10px 0; background: #fff; color: #000; border: 1px solid #000; border-top: 0; border-bottom-width: 2px }
.tabs button:has(+ .active) { border-right-color: transparent }
.market .tabs, .navigator .tabs { margin-bottom: 4px; padding-left: 2px }
.market .tabs button + button { padding-left: 11px }

.tree { flex-direction: column; padding: 0 0 0 6px }
.root { display: flex; align-items: center; gap: 4px; height: 18px }
.root span { background: #0078d7; color: #fff; padding: 0 2px; line-height: 17px; outline: 1px solid #0078d7 }
.tree ul { margin-left: 3px }
.tree li { height: 18px; display: flex; align-items: center; background: repeating-linear-gradient(#888 0 1px, transparent 1px 2px) 4px 0 / 1px 9px no-repeat }
.tree b { width: 9px; height: 9px; flex: none; border: 1px solid #888; background: #fff; font: 9px/7px "DejaVu Sans", sans-serif; text-align: center; color: #225 }
.tree b + svg { margin: 0 7px 0 1px }
.tree b::after { content: none }
.tree li .ic { margin: 0 7px 0 0 }
.tree b { margin-right: 1px; box-shadow: none }
.tree li b::before { content: none }
.tree li > b { margin-right: 8px }

/* Окна графиков */
.mdi-wrap { flex: 1; min-width: 0; display: flex; flex-direction: column; border-bottom: 1px solid #999 }
.mdi { flex: 1; min-height: 0; position: relative; display: flex; border: 2px solid #555; border-width: 2px 0 1px 2px }
.win { display: flex; flex-direction: column; background: #d7e4f2; min-width: 0 }
.back { flex: 1; padding: 0 4px 7px 8px; background: linear-gradient(#c3cfdd, #d7e4f2 30px) }
.win-title { height: 31px; flex: none; display: flex; align-items: center; gap: 4px; padding-top: 3px; font-size: 12px }
.back .win-title { color: #999 }
.win-btns { margin-left: auto; display: flex; gap: 2px }
.win-btns button { width: 32px; height: 18px; display: flex; align-items: center; justify-content: center; border: 1px solid #8a9ab5; border-radius: 2px; background: linear-gradient(#d0dcea, #c3d0e0) }
.win-btns svg { width: 11px; height: 11px }
.front .win-btns button { background: linear-gradient(#c0d3ea 50%, #9db8d6 50%); border-color: #5f7594 }
.front .win-btns .close { background: linear-gradient(#dc9a90 50%, #b8402c 50%, #c96a55); border-color: #5a1a18 }
.chart { flex: 1; min-height: 0; display: grid; grid-template-columns: 1fr 45px; grid-template-rows: 1fr 20px; padding: 2px 0 0 3px; background: #000; color: #fff; font: 9px/12px "DejaVu Sans Condensed", "DejaVu Sans", sans-serif; border: 1px solid #fff; border-width: 0 1px 1px 0; outline: 1px solid #a0a0a0 }
.plot { position: relative; border: 1px solid #fff; min-width: 0 }
.plot svg { position: absolute; inset: 0; width: 100%; height: 100% }
.order-label { position: absolute; left: 6px; top: 233px }
.atr { position: absolute; right: 1px; top: 2px; font: bold 13px/16px "DejaVu Sans", sans-serif }
.prices { position: relative }
#prices { display: flex; flex-direction: column; justify-content: space-between; height: 100% }
#prices span { padding-left: 6px; background: linear-gradient(#fff, #fff) 0 5px / 2px 1px no-repeat }
.now { position: absolute; left: 2px; top: 458px; width: 41px; padding-left: 4px; background: #fff; color: #000 }
.times { grid-column: 1 / 3; display: flex }
.times span { width: 64px; flex: none; padding-top: 3px; white-space: nowrap; background: linear-gradient(#fff, #fff) 0 0 / 1px 3px no-repeat }

.front { position: absolute; left: 2px; top: 30px; width: 487px; padding: 0 8px 7px; background: linear-gradient(#9ab4d2, #b9d1ea 34px); border: 1px solid #000; border-bottom: 2px solid #22c3d6; border-radius: 6px 6px 0 0; box-shadow: inset 1px 1px #fff }
.front .win-title { height: 32px; padding-top: 4px }
.profit { height: 191px; padding: 22px 0 0 5px; background: #000; color: #c0c0c0; border: 1px solid #fff; border-top-color: #777; border-left-color: #777; font: 12px/12px "Liberation Sans", Arial, sans-serif }
.profit tr { display: grid; grid-template-columns: 162px 55px 65px 70px 80px }
.profit thead tr { grid-template-columns: 137px 65px 100px 80px; padding-left: 10px }
.profit td { color: #0f0 }
.profit .neg td { color: #ff8c00 }
.profit .neg td:nth-child(3) { color: #0f0 }
.profit .neg td.neg:nth-child(3) { color: #ff8c00 }
.profit .zero td, .profit td:first-child, .profit .neg td:first-child { color: #c0c0c0 }

.chart-tabs { margin-top: 3px; padding-left: 7px }
.chart-tabs button { font-size: 12px }
.tab-nav { margin-left: auto; display: flex; gap: 14px; padding: 4px 1px 0 0 }
.tab-nav i { width: 0; height: 0; border: 4px solid transparent; border-width: 4px 4px 4px 0; border-right-color: #888 }
.tab-nav i + i { border-width: 4px 0 4px 4px; border-right-color: transparent; border-left-color: #888 }

/* Терминал */
.terminal { flex: none; height: 135px; display: flex; padding-top: 4px; border-bottom: 1px solid #999 }
.term-side { width: 16px; flex: none; display: flex; flex-direction: column; align-items: center; padding-bottom: 2px }
.term-side button { height: 13px; line-height: 11px; font-weight: bold; font-size: 12px }
.term-side span { flex: 1; width: 14px; margin-right: 1px; padding-top: 2px; writing-mode: vertical-rl; transform: rotate(180deg); background: linear-gradient(90deg, #d9e6f4, #c3d3e6); font: 10px/14px "DejaVu Sans", sans-serif }
.term-main { flex: 1; min-width: 0 }
.term-body { display: flex; height: 106px; border: 1px solid #999; border-width: 1px 0 0 1px; background: #c8c8c8 }
.orders { flex: 1; align-self: flex-start; background: #fff }
.c166 { width: 166px } .c282 { width: 282px } .c128 { width: 128px } .c103 { width: 103px }
.orders th { height: 24px; padding: 0 4px; border-right: 1px solid #e2e2e2; border-bottom: 1px solid #c4c4c4 }
.orders th small { margin-left: 8px; font-size: 9px; color: #777 }
.orders td { height: 20px; line-height: 19px; padding: 0 2px; border-right: 1px solid #c8c8c8; border-bottom: 1px solid #c8c8c8 }
.orders tr > * + * { text-align: right }
.orders tbody td:first-child { display: flex; align-items: center; gap: 4px; padding-left: 2px }
.orders tr > :last-child { border-right: 0; padding-right: 4px }
.orders th:last-child { padding-right: 6px }
.orders .alt td { background: #eaeaea }
.orders .sel td { background: #0078d7; color: #fff; border-bottom-color: #0078d7 }
.orders .sel .hit { background: #ff9c9c; color: #000; border: 1px solid #0078d7; padding-right: 1px; line-height: 18px }
.orders tfoot td { background: #c8c8c8; border: 0; font-weight: bold; line-height: 18px }
.dot { display: inline-block; width: 7px; height: 7px; margin: 0 7px 0 5px; border: 1px solid #888; border-radius: 50%; background: #ddd }
.scroll.low { width: 12px; padding: 6px 0 }
.scroll.low i { width: 12px; height: 57px; margin: 18px 0 auto }
.term-tabs { padding-left: 2px }
.term-tabs button { padding: 0 11px 0 10px }
.term-tabs .active { padding: 1px 11px 0 }
.tabs sub { color: #f00; font: bold 9px/10px "Open Sans", sans-serif; vertical-align: -4px; margin-left: 2px }

/* Строка состояния */
.status { height: 16px; flex: none; display: flex; line-height: 18px; padding: 4px 0 0 3px; overflow: hidden }
.status span { height: 18px; border-left: 1px solid #999; padding-left: 5px }
.status .help { flex: 1; border: 0; padding: 0 }
.s116 { width: 116px } .s102 { width: 102px } .s70 { width: 70px } .s66 { width: 66px }
.link { width: 141px; display: flex; gap: 3px }
.link svg { width: 24px; height: 12px }

/* Панель задач */
.taskbar { height: 40px; flex: none; display: flex; background: linear-gradient(90deg, #2b2927, #38302b 8%, #2f2b29 20%, #37302a 32%, #2b2a29 50%, #352a22 60%, #332a22 75%, #382f26); color: #fff }
.taskbar button { width: 49px; height: 40px; display: flex; align-items: center; justify-content: center; border-bottom: 2px solid transparent }
.taskbar button:nth-child(-n+2) { width: 48px }
.taskbar .view { width: 50px; padding-right: 2px }
.taskbar svg { width: 16px; height: 16px }
.taskbar .big { width: 22px; height: 22px }
.taskbar .run { background: linear-gradient(#76b9ed, #76b9ed) 50% 100% / 40px 2px no-repeat border-box }
.taskbar .current { background: linear-gradient(#76b9ed, #76b9ed) 0 100% / 100% 2px no-repeat border-box, #5b5652 }
.tray { margin-left: auto; display: flex; align-items: center; padding-right: 4px }
.tray .t16 { margin-right: 8px }
.lang { width: 36px; padding-left: 4px; font-size: 12px }
.clock { width: 58px; text-align: center; font-size: 11px; line-height: 18px; white-space: nowrap }
.notes { width: 54px; height: 40px; padding: 11px 0 0 16px; position: relative; border-right: 1px solid #777 }
.notes svg { width: 20px; height: 20px }
.notes b { position: absolute; left: 24px; top: 19px; width: 16px; height: 16px; border-radius: 50%; border: 1px solid #999; background: #332b25; font-size: 10px; line-height: 14px; text-align: center }
```
FILE: chart.js
```js
// Максимум и минимум каждого бара, в третях пикселя от базовой линии
const bars = `0,101 12,218 147,488 375,560 306,464 159,338 204,320 309,479 411,533 465,551 465,557 468,572 267,512 207,377 54,335 36,173 66,242 39,185 39,278 126,521 387,518 447,662 594,812 750,923 729,827 720,809 675,854 741,1181 879,1139 837,959
771,893 741,899 747,881 786,863 729,836 708,836 783,842 768,842 723,827 726,812 729,818 621,743 573,662 456,653 456,524 483,542 507,563 507,581 579,839 657,794 639,731 624,674 588,653 624,716 612,662 600,713 603,708 591,635 552,608 516,563
498,677 642,770 711,815 606,764 528,638 534,716 426,572 180,524 177,314 288,431 291,359 306,386 309,386 279,356 294,344 297,341 288,329 297,350 321,386 315,386 360,416 351,422 369,431 372,455 369,488 435,524 372,467 351,410 327,413 366,443
348,449 384,449 318,512 348,443 357,443 342,455 411,530 486,593 513,644 477,584 429,509 420,509 429,557 399,563 372,446 336,422 393,497 279,455 165,344 75,254 120,458 60,281 54,242 -6,272 -6,185 78,275 -6,167 -90,-30 -90,-30 -90,-30
-6,41 -6,98 36,215 153,380 96,302 126,236 198,290 129,296 147,350 234,356 225,293 231,308 285,374 321,434 210,410 201,440 342,500 393,506 303,431 270,350 225,341 252,341 189,338 219,389 372,518 447,500 369,485 363,560 411,530 390,452
309,431 237,332 183,251 183,332 255,599 417,572 417,500 384,458 291,431 279,389 270,356 279,350 219,347 90,287 105,218 129,206 114,191 111,173 120,191 111,185 105,149 129,200 171,215 165,215 201,272 165,251 78,185 57,107 66,149 102,233
129,257 45,176 48,143 102,191 102,278 165,299 150,242 153,269 228,371 285,371 270,353 84,290 78,197 111,203 177,284 201,293 186,290 156,218 132,254 -6,197 9,206 183,269 243,398 315,416 306,368 276,413 285,431 276,449 357,467 375,521
363,572 447,638 462,623 552,644 546,644 552,782 699,827 747,863 771,887 735,812 735,803 744,797 747,818 705,842 807,911 903,971 939,1100 1026,1151 1008,1151 1110,1241 1152,1322 1239,1322 1221,1307 1161,1241 1113,1187 1086,1163 1140,1211 1140,1226 1095,1163 1053,1136
1185,1256 1098,1208 1092,1202 1167,1328 1182,1340 1152,1256 750,1259 927,1046 948,1025 897,1052 984,1100 1080,1259 1059,1223 1083,1208 1149,1238 1023,1187 957,1079 1023,1169 1035,1130 978,1103 945,1040 900,1070 768,1151 393,893 375,470 333,488 411,638 468,611 423,527 447,545
465,572 498,590 561,665 411,599 408,503 432,521 411,518 414,527 402,521 381,551 372,533 411,503 210,428 171,281 168,311 189,362 234,407 291,419 234,329 240,428 348,458 408,554 444,584 339,479 354,461 285,449 288,488 375,590 561,650 519,614
507,665 552,722 504,629 387,551 423,623 573,812 681,908 831,959 801,1034 666,986 837,1046 582,986 441,686 342,524 378,500 369,521 426,497 375,485 429,584 540,695 579,665 588,677 600,674 600,704 657,725 711,767 669,746 714,830 669,797 648,698
654,722 537,701 501,656 618,683 636,713 648,818 675,947 759,872 792,872 834,920 798,923 852,926 801,887 789,896 798,929 825,911 837,935 846,929 810,899 729,860 615,779 633,770 606,755 606,692 639,755 576,680 531,599 495,566 477,560 507,581
429,545 420,491 447,539 477,521 444,515 357,506 402,506 399,518 435,485 447,542 477,608 546,674 600,803 621,797 603,689 570,659 555,632 525,605 402,548 285,419 282,410 291,374 309,413 393,449 276,428 252,344 279,383 327,404 354,443 333,434
402,485 342,440 381,452 357,440 291,428 231,314 210,311 219,359 177,266 165,248 222,449 342,443 261,467 324,581 393,554 402,554 387,515 342,503 339,467 288,425 231,404 264,695 549,671 579,701 675,818 690,935 672,761 702,797 774,962 690,818
678,803 675,764 675,752 651,761 600,737 588,641 606,668 621,671 567,644 567,617 534,620 492,545 609,630 582,614 525,584 531,665 615,674 630,656 615,689 684,788 732,836 729,860 594,830 699,911 720,857 696,854 747,860 834,1010 846,968 804,941
807,923 834,992 888,989 909,1100 981,1070 951,1043 948,1028 885,980 882,926 894,950 906,959 918,998 807,923 789,881 735,857 714,794 720,794 732,800 729,851 405,905 312,683 537,668 372,593 414,539 336,467 288,383 219,332 81,260 147,287 69,272
81,263 -6,149 93,221 57,239 69,185 66,191 177,311 246,347 309,443 336,458 333,419 315,425 324,419 291,467 333,404 270,395 219,386 219,344 249,374 246,392 156,284 15,248 69,380 291,674 417,677 387,569 432,599 279,461 48,347 -57,116
-222,6 -114,45 -165,48 -255,-126 -325,-183 -240,-135 -213,-129 -261,-189 -258,9 -66,90 24,102 42,213 171,219 123,210 129,222 156,219 164,222 198,291 312,389 312,360 342,414 399,525 335,528 291,363 183,389 195,273 -9,255 45,231 60,450 408,591
540,768 546,642 579,672 603,696 645,804 710,864 670,771 657,750 582,768 582,756 570,744 516,612 528,579 531,575 528,582 537,639 615,746 600,693 591,642 582,678 521,615 558,615 540,612 477,573 477,555 507,678 618,696 546,663 465,575 363,492
357,450 423,537 504,651 594,690 612,696 657,825 717,801 744,873 750,873 765,867 834,906 867,984 906,1011 897,1086 903,1092 840,978 882,1047 885,1038 846,1020 711,888 381,856 384,516 462,537 465,588 516,624 519,786 633,801 609,759 499,651 567,856
763,988 798,1047 906,1020 927,1023 966,1071 939,1056 891,966 870,1125 798,897 819,909 765,879 699,813 741,828 705,744 708,783 705,783 723,783 639,750 642,699 675,759 699,765 729,774 639,774 657,768`;

const base = 227;
const firstX = 58;
const step = 2;

let path = '';
bars.split(/\s+/).forEach((bar, i) => {
  const [hi, lo] = bar.split(',').map(v => base + Math.round(v / 3));
  path += `M${firstX + i * step}.5 ${hi}V${lo}`;
});

// Разделители дней
const days = [162, 346, 538, 730, 922, 1114, 1306];
const dayLines = days.map(x => `M${x}.5 0V2000`).join('');

document.getElementById('plot').innerHTML = `
  <path d="${dayLines}" stroke="#fff" stroke-dasharray="3 3"/>
  <path d="M0 244.500H4000" stroke="#32cd32" stroke-dasharray="9 6 3 6"/>
  <path d="${path}" stroke="#0f0"/>
  <path d="M0 463.500H4000" stroke="#778899"/>
  <path d="M1302 0h9l-4.500 5z" fill="#778899"/>`;

// Шкала цен
let prices = '';
for (let p = 91225; p >= 90425; p -= 40) prices += `<span>0.${p}</span>`;
document.getElementById('prices').innerHTML = prices;

// Шкала времени
const times = ['31 Oct 2019', '31 Oct 11:45', '31 Oct 19:45', '1 Nov 03:45', '1 Nov 11:45', '1 Nov 19:45'];
for (let d = 4; d <= 8; d++) {
  ['04:45', '12:45', '20:45'].forEach(t => times.push(`${d} Nov ${t}`));
}
document.getElementById('times').innerHTML = times.map(t => `<span>${t}</span>`).join('');
```
